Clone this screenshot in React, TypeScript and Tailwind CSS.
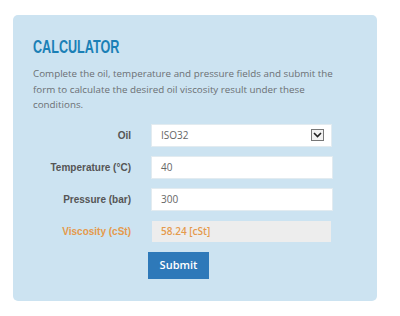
import { useState } from "react";

const rows = [
  { label: "Temperature (°C)", value: "40" },
  { label: "Pressure (bar)", value: "300" },
];

export default function App() {
  const [oil] = useState("ISO32");

  return (
    <div className="h-[316px] w-[400px] bg-white pl-[13px] pt-[15px]">
      <div className="h-[286px] w-[364px] rounded-[5px] bg-[#cce3f1] px-[20px] pt-[21px]">
        <h1 className="w-max origin-left scale-x-[0.7] font-['Liberation_Sans',sans-serif] text-[18px] leading-[22px] font-bold text-[#1a80b6]">
          CALCULATOR
        </h1>
        <p className="mt-[8px] font-['Open_Sans',sans-serif] text-[9.8px] leading-[15.5px] text-[#6b6f73]">
          Complete the oil, temperature and pressure fields and submit the form to calculate the desired
          oil viscosity result under these conditions.
        </p>

        <div className="mt-[12px] flex flex-col gap-[11px] font-['Liberation_Sans',sans-serif]">
          <div className="flex items-center">
            <label className="w-[98px] text-right text-[10px] font-bold text-[#555]">Oil</label>
            <div className="ml-[21px] flex h-[21px] w-[179px] items-center justify-between bg-white pl-[9px] pr-[7px] shadow-[0_0_0_1px_#e2ebf0]">
              <span className="font-['Open_Sans',sans-serif] text-[10px] text-[#666]">{oil}</span>
              <span className="flex h-[12px] w-[13px] items-center justify-center border border-[#777] bg-[#f2f2f2]">
                <svg width="9" height="6" viewBox="0 0 9 6" fill="none">
                  <path d="M1 1l3.5 3.5L8 1" stroke="#222" strokeWidth="1.6" />
                </svg>
              </span>
            </div>
          </div>

          {rows.map((row) => (
            <div key={row.label} className="flex items-center">
              <label className="w-[98px] text-right text-[10px] font-bold text-[#555]">{row.label}</label>
              <div className="ml-[21px] flex h-[21px] w-[180px] items-center bg-white pl-[9px] shadow-[0_0_0_1px_#e2ebf0]">
                <span className="font-['Open_Sans',sans-serif] text-[10px] text-[#666]">{row.value}</span>
              </div>
            </div>
          ))}

          <div className="flex items-center">
            <label className="w-[98px] text-right text-[10px] font-bold text-[#e59a4c]">Viscosity (cSt)</label>
            <div className="ml-[21px] flex h-[21px] w-[179px] items-center bg-[#ededed] pl-[9px]">
              <span className="font-['Open_Sans',sans-serif] text-[10px] font-semibold text-[#e59a4c]">58.24 [cSt]</span>
            </div>
          </div>
        </div>

        <button className="mt-[10px] ml-[115px] h-[27px] w-[61px] bg-[#2e79b9] font-['Open_Sans',sans-serif] text-[11px] font-semibold text-white">
          Submit
        </button>
      </div>
    </div>
  );
}
